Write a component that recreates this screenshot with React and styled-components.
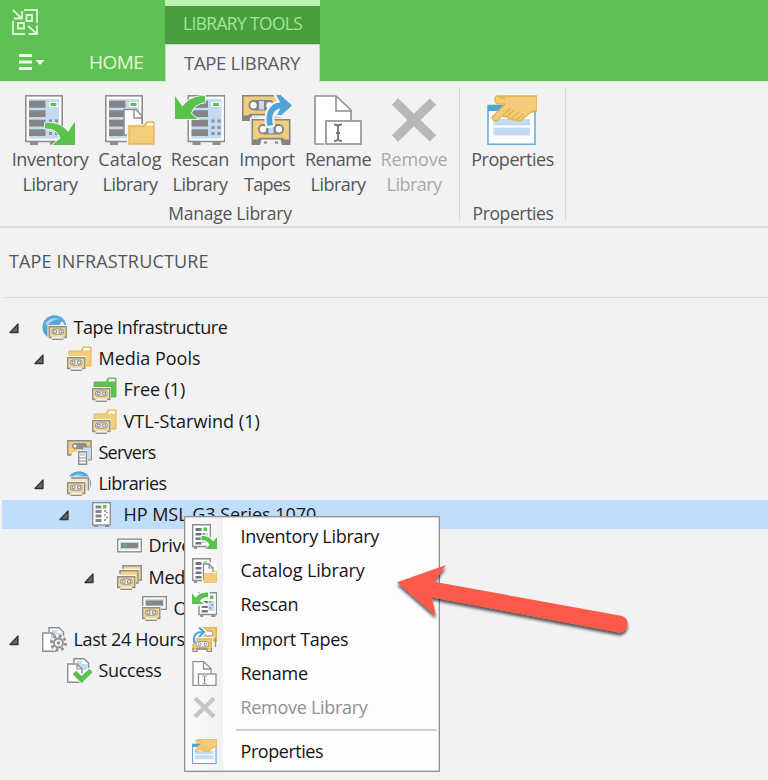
import React from 'react';
import styled, { createGlobalStyle } from 'styled-components';

const GlobalStyle = createGlobalStyle`
  * { box-sizing: border-box; }
  body { margin: 0; background: #f2f2f2; }
`;

const Window = styled.div`
  position: relative;
  width: 768px;
  height: 780px;
  overflow: hidden;
  background: #f2f2f2;
  color: #161616;
  font-family: "Open Sans", "Noto Sans", sans-serif;
  font-size: 18px;
  line-height: 25px;
  white-space: nowrap;
  svg { display: block; flex: none; }
`;

const Label = styled.span`
  display: block;
  letter-spacing: ${(p) => p.$ls || 0}px;
`;

/* ---------- header ---------- */
const Header = styled.header`
  display: flex;
  height: 81px;
  background: #5fc152;
  color: #e4f8df;
  font-size: 19px;
`;
const HeaderLeft = styled.div`
  display: flex;
  flex-direction: column;
  width: 165px;
`;
const LogoRow = styled.div`
  height: 44px;
  padding: 9px 0 0 12px;
`;
const MenuRow = styled.div`
  display: flex;
  align-items: center;
  height: 38px;
  padding-left: 19px;
`;
const HomeTab = styled.div`
  margin-left: 44px;
`;
const ContextTabs = styled.div`
  width: 155px;
  border-top: 6px solid #b9f5b1;
  background: #4a9e3e;
`;
const ContextTitle = styled.div`
  height: 38px;
  padding: 5px 0 0 18px;
  color: #a2e896;
  font-size: 17.3px;
`;
const ActiveTab = styled.div`
  height: 38px;
  padding: 5px 0 0 18px;
  background: #f2f2f2;
  border: 1px solid #c9d9c6;
  border-bottom: 0;
  color: #5c5c60;
  font-size: 18.5px;
`;

/* ---------- ribbon ---------- */
const Ribbon = styled.section`
  display: flex;
  height: 147px;
  padding-top: 6px;
  border-top: 1px solid #dcebd9;
  border-bottom: 2px solid #dddddd;
  color: #555458;
`;
const Group = styled.div`
  display: flex;
  flex-direction: column;
  width: ${(p) => p.$w}px;
  height: 133px;
  border-right: 1px solid #d9d9db;
`;
const Buttons = styled.div`
  display: flex;
  flex: none;
  height: 113px;
  padding-left: ${(p) => p.$pad || 0}px;
`;
const RibbonButton = styled.div`
  display: flex;
  flex-direction: column;
  align-items: center;
  width: ${(p) => p.$w}px;
  padding-top: 7px;
  color: ${(p) => (p.$disabled ? '#aaa8ad' : 'inherit')};
  svg { margin: 0 0 2px -1px; }
`;
const GroupTitle = styled.div`
  display: flex;
  justify-content: center;
  padding: 0 0 0 1px;
  font-size: 17.5px;
`;

/* ---------- tree ---------- */
const PaneTitle = styled.h1`
  margin: 0 0 0 5px;
  height: 70px;
  padding: 21px 0 0 4px;
  border-bottom: 1px solid #d9d9d9;
  color: #555;
  font-size: 18px;
  font-weight: 400;
`;
const Tree = styled.div`
  display: flex;
  flex-direction: column;
  padding: 14px 0 0 2px;
`;
const Node = styled.div`
  display: flex;
  align-items: center;
  height: 31.2px;
  padding-left: ${(p) => 7 + p.$level * 25}px;
  background: ${(p) => (p.$selected ? 'linear-gradient(#bfdefb, #bfdefb) 0 1px / 100% 29px no-repeat' : 'none')};
`;
const Toggle = styled.div`
  width: 33px;
  flex: none;
  padding-top: 2px;
`;
const NodeText = styled(Label)`
  margin-left: 6.5px;
`;

/* ---------- context menu ---------- */
const Menu = styled.div`
  position: absolute;
  left: 184px;
  top: 516px;
  width: 256px;
  height: 256px;
  padding: 2px 2px;
  border: 1px solid #929292;
  background: linear-gradient(90deg, #fbfbfb, #f1f1f1 38px, #fdfdfd 38px) #fdfdfd;
  box-shadow: inset 0 0 0 1px #d5d5d5;
`;
const MenuItem = styled.div`
  display: flex;
  align-items: center;
  height: 34.3px;
  padding-left: 5px;
  color: ${(p) => (p.$disabled ? '#929095' : '#161616')};
  span { margin-left: 23.5px; }
`;
const MenuRule = styled.div`
  height: 2px;
  margin: 4px 0 4px 49px;
  background: #cfcfcf;
`;
const Pointer = styled.div`
  position: absolute;
  left: 385px;
  top: 555px;
`;

/* ---------- icons ---------- */
const G = '#8e8e8e';
const GREEN = '#5bc24e';

const Logo = () => (
  <svg width="26" height="26" viewBox="0 0 26 26" fill="none" stroke="#dcf6d8" strokeWidth="1.8">
    <path d="M12 1H25V14M1 12V25H13M14.5 6H20V12H14.5ZM6 14H12V19.500H6ZM1 1L9 9M10 2V9.500H2M16 17L24 24M25 16.500V25H16.500" />
  </svg>
);
const FileMenu = () => (
  <svg width="26" height="18" viewBox="0 0 26 18" fill="#eefbeb">
    <path d="M0 1H13V4H0ZM0 7.500H13V10.500H0ZM0 14H13V17H0ZM16.500 7H25.500L21 12Z" />
  </svg>
);
const Triangle = () => (
  <svg width="11" height="11" viewBox="0 0 11 11">
    <path d="M9 1V9.500H1Z" fill="#666" stroke="#333" strokeWidth="1.3" strokeLinejoin="round" />
  </svg>
);

const Server = ({ x = 0 }) => (
  <g transform={`translate(${x} 0)`}>
    <path d="M5 46H13V50H5ZM25 46H33V50H25Z" fill={G} />
    <rect x=".8" y=".8" width="36.400" height="45.700" fill="#fff" stroke={G} strokeWidth="1.6" />
    <path d="M4 4H34V43.500H4Z" fill="#c3daf0" />
    <path d="M4 5.700H20.500V12.700H4ZM4 15.300H20.500V22H4ZM4 24.700H20.500V31.500H4ZM4 34.200H20.500V41H4Z" fill="#858585" />
    <path d="M24 7H33V12H24Z" fill="#fff" />
    <path d="M25.500 8H31.500V11H25.500Z" fill={GREEN} />
    <path d="M24 24.500h3v3h-3zM30 24.500h3v3h-3zM24 31h3v3h-3zM30 31h3v3h-3zM24 37h3v3h-3zM30 37h3v3h-3z" fill={G} />
  </g>
);
const ArrowOut = () => (
  <path d="M20 28C31 27 39 31 43 37L50 26.500V50H27.500L35.500 43C33 36 27 33 20 33.500Z" fill={GREEN} stroke="#f7faf7" strokeWidth="1.6" paintOrder="stroke" />
);
const Folder = ({ fill = '#f3cd7b', stroke = '#e5b64f' }) => (
  <g fill={fill} stroke={stroke} strokeWidth="1.3">
    <path d="M39 31L42 27H49V49H24V31Z" />
    <path d="M41 30.500L43 28H48V30.500Z" fill="#fff" stroke="none" />
  </g>
);

const InventoryIcon = ({ size = 50 }) => (
  <svg width={size} height={size} viewBox="0 0 50 50"><Server /><ArrowOut /></svg>
);
const CatalogIcon = ({ size = 50 }) => (
  <svg width={size} height={size} viewBox="0 0 50 50">
    <Server />
    <path d="M19 14.500H31L37 21V40H19Z" fill="#fff" stroke={G} strokeWidth="1.6" />
    <path d="M29 15V23H37" fill="none" stroke={G} strokeWidth="1.4" />
    <path d="M22 29H38L41 25H52V52H22Z" fill="#f2f2f2" />
    <Folder />
  </svg>
);
const RescanIcon = ({ size = 50 }) => (
  <svg width={size} height={size} viewBox="0 0 50 50">
    <Server x={12.5} />
    <path d="M30 .8C20 .8 12 5 7.500 11.500L0 1V24H22.500L16 18.500C18 12 23 8 30 7.500Z" fill={GREEN} stroke="#f7faf7" strokeWidth="1.600" paintOrder="stroke" />
  </svg>
);
const Cassette = ({ x, y }) => (
  <g transform={`translate(${x} ${y})`}>
    <path d="M0 0H39V26H0Z" fill="#858585" />
    <path d="M1.600 1.600H37.400V20.500H1.600Z" fill="#f3cd7b" />
    <rect x="6.500" y="5" width="26" height="10.500" rx="5" fill="#858585" />
    <path d="M17 6H22V14.500H17Z" fill="#c3daf0" />
    <circle cx="11.500" cy="10.200" r="3.200" fill="#fff" />
    <circle cx="27.500" cy="10.200" r="3.200" fill="#fff" />
    <path d="M6 21L7.500 18.800H31.500L33 21Z" fill="#858585" />
    <path d="M8.500 26L10 20.500H29L30.500 26Z" fill="#efefef" />
    <path d="M12.500 23.500h3M23.500 23.500h3" stroke="#858585" strokeWidth="1.800" />
  </g>
);
const ImportIcon = ({ size = 50 }) => (
  <svg width={size} height={size} viewBox="0 0 50 50">
    <Cassette x={0} y={0} />
    <path d="M8 22.500H50V50H8Z" fill="#f2f2f2" />
    <Cassette x={9.5} y={24} />
    <g strokeLinejoin="round">
      <path d="M31 30C28.500 20 32 14 38.500 13.500L35 20H39.500L50 10.500L38.500 0H34L38.500 7.500C28 8 22.500 18 25.500 31Z" fill="#4fa3d5" stroke="#f2f2f2" strokeWidth="4.500" paintOrder="stroke" />
    </g>
  </svg>
);
const MenuImportIcon = () => (
  <svg width="25" height="25" viewBox="0 0 25 25">
    <path d="M8 .7H24.300V14H8Z" fill="#f3cd7b" stroke="#e5b64f" strokeWidth="1.400" />
    <rect x="13" y="4" width="8" height="5" rx="2.500" fill="#fff" stroke={G} />
    <path d="M0 10H21V25H0Z" fill="#fafafa" />
    <path d="M1 12H19.500V22H1Z" fill="#f3cd7b" stroke="#e5b64f" strokeWidth="1.400" />
    <path d="M1 21V24.300H5V22H15V24.300H19.500V21M23.500 11V20" fill="none" stroke={G} strokeWidth="1.300" />
    <rect x="4" y="14.500" width="13" height="5.500" rx="2.700" fill="#fff" stroke={G} />
    <circle cx="7.500" cy="17.200" r="1.400" fill="none" stroke={G} /><circle cx="13.500" cy="17.200" r="1.400" fill="none" stroke={G} />
    <path d="M2.500 16.500C0 9 4 5 10 5M7 .5L12 5L7 10" fill="none" stroke="#fafafa" strokeWidth="4.500" />
    <path d="M3 16.500C0 9 4 5 10 5M7 .5L12 5L7 10" fill="none" stroke="#4fa3d5" strokeWidth="2.200" />
  </svg>
);
const RenameIcon = ({ size = 50 }) => (
  <svg width={size} height={size} viewBox="0 0 50 50" fill="none" stroke={G} strokeWidth={size > 30 ? 1.6 : 2.6}>
    <path d="M12 49H2V1H24L38 15V25H12Z" fill="#fff" stroke="none" />
    <path d="M11 49H2V1H23L38 15V25M23 1V16H38" />
    <rect x="13" y="26" width="35" height="23" fill="#fff" />
    <path d="M21 29.500C23 29.500 25 30 25 32C25 30 27 29.500 29 29.500M25 31V45M21 46C23 46 25 45.500 25 43.500C25 45.500 27 46 29 46M23 38H27" stroke="#777" strokeWidth="1.800" />
  </svg>
);
const RemoveIcon = ({ size = 50 }) => (
  <svg width={size} height={size} viewBox="0 0 50 50">
    <path d="M6 6.500L44 43.500M44 6.500L6 43.500" stroke={size > 30 ? '#b8b8b8' : '#c6c6c6'} strokeWidth="9" />
  </svg>
);
const PropertiesIcon = ({ size = 50 }) => (
  <svg width={size} height={size} viewBox="0 0 50 50">
    <rect x="1" y="10.500" width="47" height="38.700" fill="#fff" stroke="#5eacd8" strokeWidth={size > 30 ? 1.5 : 2.4} />
    <path d="M1 10H20L12 16H1Z" fill="#4fa3d5" />
    <path d="M6.500 24H43V30.500H6.500ZM6.500 32.500H43V40.500H6.500Z" fill="#c3daf0" />
    <path d="M11 1H50V15.500L43 17.500L34 25.500Q31.500 27 29.500 24.500Q26.500 26.500 24.500 23.500Q21.500 25 19.500 21.500Q17 23 15.500 20.500L10 25.500Q6.500 27 5 22.500L18 9H12Q8 8.500 8 5Q8 1 11 1Z" fill="#f2cc7a" stroke="#e3b34a" strokeWidth="1.400" strokeLinejoin="round" />
    <path d="M12 3H18M15.500 20.500L24 13M19.500 21.500L27.500 15M24.500 23.500L32 17M29.500 24.500L37 18.500" fill="none" stroke="#e3b34a" strokeWidth="1.500" />
  </svg>
);

/* 25px tree drawings */
const Small = ({ children }) => <svg width="25" height="25" viewBox="0 0 25 25">{children}</svg>;
const Tape = ({ x = 0, y = 11 }) => (
  <g transform={`translate(${x} ${y})`}>
    <path d="M-1 -1H19V14H-1Z" fill="#f5f5f5" />
    <path d="M.7 .7H17.800V11.500H.7Z" fill="#f5d48c" stroke={G} strokeWidth="1.400" />
    <rect x="3.300" y="3" width="12" height="5.200" rx="2.600" fill="#fff" stroke={G} strokeWidth="1" />
    <circle cx="6.600" cy="5.600" r="1.600" fill="#fff" stroke={G} strokeWidth="1.200" />
    <circle cx="12" cy="5.600" r="1.600" fill="#fff" stroke={G} strokeWidth="1.200" />
    <path d="M3.500 10.500H15V13H3.500Z" fill="#fbf3df" />
    <path d="M3.500 13.300H15" stroke={G} strokeWidth="1.400" />
  </g>
);
const Globe = ({ x = 12.5 }) => (
  <g>
    <circle cx={x} cy="12.300" r="12" fill="#57a7d8" />
    <path d={`M${x - 9} 8Q${x - 4} 1.500 ${x + 5} 4Q${x - 4} 5 ${x - 7} 11Z`} fill="#a9d6ee" />
    <path d={`M${x + 5} 9L${x + 8} 6L${x + 10} 10L${x + 7} 11Z`} fill="#e4f2fa" />
  </g>
);
const InfraIcon = () => <Small><Globe /><Tape x={6.5} /></Small>;
const PoolIcon = ({ fill = '#f3cd7b', stroke = '#e5b64f' }) => (
  <Small>
    <path d="M2 5H14L16 1H24V20H2Z" fill={fill} stroke={stroke} />
    <path d="M16 4.500L17.200 2H23V4.500Z" fill="#fff" />
    <Tape />
  </Small>
);
const ServersIcon = () => (
  <Small>
    <path d="M.7 .7H24V15H.7Z" fill="#f3cd7b" stroke={G} strokeWidth="1.500" />
    <rect x="5" y="3" width="15" height="6" rx="3" fill={G} /><circle cx="8" cy="6" r="1.500" fill="#fff" />
    <path d="M3 18L6 12H16V18Z" fill="#f2f2f2" />
    <path d="M15.500 7H24.500V20H15.500Z" fill="#c3daf0" stroke={G} />
    <path d="M10 10H21V25H10Z" fill="#f2f2f2" />
    <path d="M11.700 11.700H19.500V24.300H11.700Z" fill="#fff" stroke={G} strokeWidth="1.500" />
    <path d="M13 13H18.500V16H13Z" fill="#c3daf0" /><path d="M12 18H19M12 21H19" stroke={G} />
  </Small>
);
const LibrariesIcon = () => (
  <Small>
    <Globe x={12} />
    <path d="M0 5.500H23V25H0Z" fill="#f2f2f2" />
    <path d="M4 7H21.500V19.500H4Z" fill="#f5e3bb" />
    <path d="M4 7H21.500V19.500M1 9.500" fill="none" stroke={G} strokeWidth="1.400" />
    <Tape />
  </Small>
);
const LibraryIcon = () => (
  <Small>
    <path d="M2 23H6V25H2ZM13 23H17V25H13Z" fill={G} />
    <rect x=".7" y=".7" width="17.600" height="22.300" fill="#fff" stroke={G} strokeWidth="1.400" />
    <path d="M3.500 3.500h6v3h-6zM3.500 8h6v3h-6zM3.500 12.500h6v3h-6zM3.500 17h6v3h-6z" fill="#858585" />
    <path d="M11 3h3.500v3.500H11z" fill={GREEN} />
    <path d="M12 9h2M12 13h1.500M14 15.500h2M12 18h2M14 10.500h1.500" stroke="#77858f" strokeWidth="1.300" />
  </Small>
);
const DriveBox = ({ y = 5.5 }) => (
  <g transform={`translate(0 ${y})`}>
    <rect x=".7" y=".7" width="23.600" height="12.600" fill="#fff" stroke={G} strokeWidth="1.400" />
    <path d="M3 3H22V11H3Z" fill="#c3daf0" /><path d="M4 4.500H21V9.500H4Z" fill="#858585" />
    <path d="M6 7H10" stroke={GREEN} strokeWidth="1.600" />
  </g>
);
const DriveIcon = () => <Small><DriveBox /></Small>;
const MediaIcon = () => (
  <Small>
    <path d="M6 4V.8H24.300V15H21" fill="#f5d48c" stroke={G} strokeWidth="1.400" />
    <path d="M4.500 3.800H22V16H4.500Z" fill="#f5f5f5" />
    <path d="M3 9V5.700H21V18H18" fill="#f5d48c" stroke={G} strokeWidth="1.400" />
    <Tape />
  </Small>
);
const OnlineIcon = () => <Small><DriveBox y={0} /><Tape /></Small>;
const Pages = () => (
  <>
    <path d="M7 5V.7H17L21.500 5V10" fill="#fff" stroke={G} strokeWidth="1.400" />
    <path d="M10 3H15V6H21V12H10Z" fill="#c3daf0" />
    <path d="M.7 6H10L15 11V24.300H.7Z" fill="#fff" stroke={G} strokeWidth="1.400" />
    <path d="M10 6V11H15" fill="none" stroke={G} strokeWidth="1.200" />
  </>
);
const HistoryIcon = () => (
  <Small>
    <Pages />
    <circle cx="16.500" cy="16" r="9" fill="#f2f2f2" />
    <circle cx="16.500" cy="16" r="7" fill="none" stroke={G} strokeWidth="3" strokeDasharray="2.750 2.750" />
    <circle cx="16.500" cy="16" r="4.500" fill="#f2f2f2" stroke={G} strokeWidth="1.800" />
    <circle cx="16.500" cy="16" r="1.700" fill={G} />
  </Small>
);
const SuccessIcon = () => (
  <Small>
    <Pages />
    <path d="M8 15L14 21L23.500 12" fill="none" stroke="#f7f7f7" strokeWidth="7" />
    <path d="M7.500 14.500L14.500 21.500L24 12.500" fill="none" stroke={GREEN} strokeWidth="5" />
  </Small>
);

/* menu-sized servers */
const MiniServer = ({ x = 0 }) => (
  <g transform={`translate(${x} 0)`}>
    <path d="M2 22.500H5V25H2ZM13 22.500H17V25H13Z" fill={G} />
    <path d="M.7 .7H18.300V22.500H.7Z" fill="#fff" stroke={G} strokeWidth="1.400" />
    <path d="M3.500 4h6v3h-6zM3.500 9h6v2.500h-6zM3.500 13.500h6V16h-6zM3.500 18h6v2.500h-6z" fill="#6f7880" />
    <path d="M11.500 3.500h3.500v3.500h-3.500z" fill={GREEN} />
    <path d="M10 9h6v10h-6z" fill="#c3daf0" /><path d="M11 10h2M13 13h2M11 16h2" stroke={G} strokeWidth="1.300" />
  </g>
);
const MenuInventoryIcon = () => (
  <Small>
    <MiniServer />
    <path d="M9.500 12C15 11.500 19 14 21 17.500L25 13V25H13.500L17.500 21C16 17.500 13.500 16 9.500 16Z" fill={GREEN} stroke="#fafafa" strokeWidth="1.600" paintOrder="stroke" />
  </Small>
);
const MenuCatalogIcon = () => (
  <Small>
    <MiniServer /><path d="M10 4.500H25V25H10Z" fill="#f7f7f7" />
    <path d="M11.500 6H17L21 10V21H11.500Z" fill="#fff" stroke={G} strokeWidth="1.300" />
    <path d="M17 6V10H21" fill="none" stroke={G} strokeWidth="1.200" />
    <g transform="scale(.5)"><Folder /></g>
  </Small>
);
const MenuRescanIcon = () => (
  <Small>
    <MiniServer x={6.3} />
    <path d="M16 .5C10 .5 6 2 4 6L0 1.500V12H12L8 9C10 6 12 5 16 5Z" fill={GREEN} stroke="#f7f7f7" strokeWidth="3.500" paintOrder="stroke" />
  </Small>
);

const manageButtons = [
  { w: 80, icon: InventoryIcon, lines: [['Inventory', -0.36], ['Library', -0.55]] },
  { w: 80, icon: CatalogIcon, lines: [['Catalog', 0.06], ['Library', -0.55]] },
  { w: 60, icon: RescanIcon, lines: [['Rescan', -0.2], ['Library', -0.55]] },
  { w: 74, icon: ImportIcon, lines: [['Import', -0.28], ['Tapes', -0.7]] },
  { w: 68, icon: RenameIcon, lines: [['Rename', -0.5], ['Library', -0.55]] },
  { w: 84, icon: RemoveIcon, disabled: true, lines: [['Remove', -0.14], ['Library', -0.55]] },
];

const nodes = [
  { level: 0, open: true, icon: InfraIcon, text: 'Tape Infrastructure', ls: -0.43 },
  { level: 1, open: true, icon: PoolIcon, text: 'Media Pools', ls: -0.01 },
  { level: 2, icon: () => <PoolIcon fill={GREEN} stroke={GREEN} />, text: 'Free (1)', ls: -0.09 },
  { level: 2, icon: PoolIcon, text: 'VTL-Starwind (1)', ls: 0.05 },
  { level: 1, icon: ServersIcon, text: 'Servers', ls: -0.75 },
  { level: 1, open: true, icon: LibrariesIcon, text: 'Libraries', ls: -0.54 },
  { level: 2, open: true, icon: LibraryIcon, text: 'HP MSL G3 Series 1070', ls: -0.03, selected: true },
  { level: 3, icon: DriveIcon, text: 'Drives', ls: -0.3 },
  { level: 3, open: true, icon: MediaIcon, text: 'Media', ls: -0.3 },
  { level: 4, icon: OnlineIcon, text: 'Online', ls: 0 },
  { level: 0, open: true, icon: HistoryIcon, text: 'Last 24 Hours', ls: -0.32 },
  { level: 1, icon: SuccessIcon, text: 'Success', ls: -0.34 },
];

const menuItems = [
  { icon: MenuInventoryIcon, text: 'Inventory Library', ls: -0.27 },
  { icon: MenuCatalogIcon, text: 'Catalog Library', ls: -0.14 },
  { icon: MenuRescanIcon, text: 'Rescan', ls: -0.28 },
  { icon: MenuImportIcon, text: 'Import Tapes', ls: -0.32 },
  { icon: RenameIcon, text: 'Rename', ls: -0.3 },
  { icon: RemoveIcon, text: 'Remove Library', ls: -0.3, disabled: true },
  { rule: true },
  { icon: PropertiesIcon, text: 'Properties', ls: -0.45 },
];

export default function App() {
  return (
    <Window>
      <GlobalStyle />
      <Header>
        <HeaderLeft>
          <LogoRow><Logo /></LogoRow>
          <MenuRow>
            <FileMenu />
            <HomeTab><Label $ls={-0.55}>HOME</Label></HomeTab>
          </MenuRow>
        </HeaderLeft>
        <ContextTabs>
          <ContextTitle><Label $ls={-0.55}>LIBRARY TOOLS</Label></ContextTitle>
          <ActiveTab><Label $ls={-0.3}>TAPE LIBRARY</Label></ActiveTab>
        </ContextTabs>
      </Header>

      <Ribbon>
        <Group $w={460}>
          <Buttons $pad={10}>
            {manageButtons.map(({ w, icon: Icon, lines, disabled }) => (
              <RibbonButton key={lines[0][0]} $w={w} $disabled={disabled}>
                <Icon />
                {lines.map(([t, ls]) => <Label key={t} $ls={ls}>{t}</Label>)}
              </RibbonButton>
            ))}
          </Buttons>
          <GroupTitle><Label $ls={-0.25}>Manage Library</Label></GroupTitle>
        </Group>
        <Group $w={106}>
          <Buttons>
            <RibbonButton $w={106}>
              <PropertiesIcon />
              <Label $ls={-0.45}>Properties</Label>
            </RibbonButton>
          </Buttons>
          <GroupTitle><Label $ls={-0.38}>Properties</Label></GroupTitle>
        </Group>
      </Ribbon>

      <PaneTitle><Label $ls={0.16}>TAPE INFRASTRUCTURE</Label></PaneTitle>
      <Tree>
        {nodes.map(({ level, open, icon: Icon, text, ls, selected }) => (
          <Node key={text} $level={level} $selected={selected}>
            <Toggle>{open && <Triangle />}</Toggle>
            <Icon />
            <NodeText $ls={ls}>{text}</NodeText>
          </Node>
        ))}
      </Tree>

      <Menu>
        {menuItems.map(({ icon: Icon, text, ls, disabled, rule }) =>
          rule ? <MenuRule key="rule" /> : (
            <MenuItem key={text} $disabled={disabled}>
              <Icon size={25} />
              <Label $ls={ls}>{text}</Label>
            </MenuItem>
          ))}
      </Menu>

      <Pointer>
        <svg width="260" height="90" viewBox="385 555 260 90">
          <defs>
            <filter id="shadow" x="-10%" y="-20%" width="120%" height="160%">
              <feDropShadow dx="0" dy="3" stdDeviation="1.700" floodColor="#000" floodOpacity=".65" />
            </filter>
          </defs>
          <path
            d="M397 582.300L446 565L434.300 581.700L621 615.800C631.500 618 629 634 617.500 632.300L431.700 597.300L436 616Z"
            fill="#fd5a4c"
            filter="url(#shadow)"
          />
        </svg>
      </Pointer>
    </Window>
  );
}
